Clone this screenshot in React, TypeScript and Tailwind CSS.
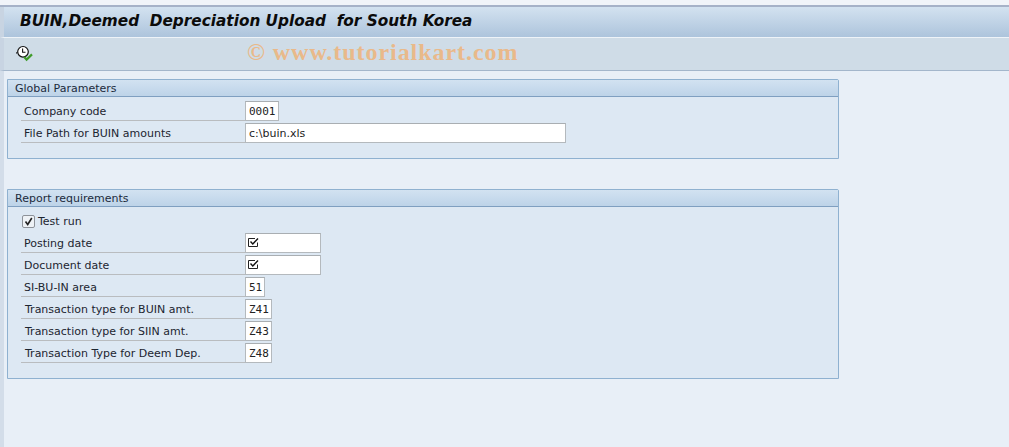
import React from "react";

const font = "font-['DejaVu_Sans',sans-serif]";

function Field({ value, w, mono = true, check = false }: { value?: string; w: string; mono?: boolean; check?: boolean }) {
  return (
    <div
      className={`${w} h-[20px] bg-white border border-[#b4b9bd] border-t-[#a9aeb2] flex items-center pl-[3px] text-[11px] text-[#222] leading-none ${mono ? "font-['DejaVu_Sans_Mono',monospace]" : ""}`}
    >
      {check ? <CheckBoxIcon /> : value}
    </div>
  );
}

function CheckBoxIcon() {
  return (
    <svg width="11" height="11" viewBox="0 0 11 11" className="-ml-[1px] -mt-[1px]">
      <path d="M9.5 5.5V9.5H0.5V1.5H7" fill="none" stroke="#222" strokeWidth="1" />
      <path d="M2.5 4.5L4.8 7L10 1.5" fill="none" stroke="#111" strokeWidth="1.4" />
    </svg>
  );
}

function Row({ label, children, pl = "pl-[3px]" }: { label: string; children: React.ReactNode; pl?: string }) {
  return (
    <div className="flex h-[22px] items-start">
      <div className={`w-[224px] h-[20px] border-b border-[#b9bcbf] ${pl} pt-[4px] flex items-center text-[11px] text-[#1c2530] whitespace-nowrap`}>
        {label}
      </div>
      {children}
    </div>
  );
}

function Group({ title, className, children }: { title: string; className: string; children: React.ReactNode }) {
  return (
    <section className={`w-[832px] ${className} border border-[#8fb1d0] rounded-tr-[2px] bg-[#dde8f3] flex flex-col`}>
      <div className="h-[17px] shrink-0 border-b border-[#7f9fc0] bg-gradient-to-b from-[#d2e2f1] to-[#bdd3e8] pl-[7px] pt-[2px] flex items-center text-[11px] text-[#1c2b3c]">
        {title}
      </div>
      <div className="pl-[13px]">{children}</div>
    </section>
  );
}

export default function App() {
  return (
    <div className={`w-[1009px] h-[447px] overflow-hidden bg-[#e8eff7] ${font}`}>
      <div className="h-[5px] bg-[#f1f4f9] border-l-[3px] border-[#f1f4f9]" />
      <div className="h-[2px] bg-[#a6b2c8]" />
      <div className="h-[30px] border-l-[4px] border-[#c8d4e2] bg-gradient-to-b from-[#d3e2f0] to-[#adc4dc] pl-[16px] flex items-center">
        <h1 className="font-bold italic text-[15.3px] text-[#0b0b0b] whitespace-pre leading-none">
          BUIN,Deemed  Depreciation Upload  for South Korea
        </h1>
      </div>
      <div className="relative h-[34px] border-t border-[#eef3f8] border-b border-b-[#a3b6cb] border-l-[4px] border-l-[#c8d4e2] bg-[#cfdce7] pl-[12px] flex items-center">
        <svg width="17" height="17" viewBox="0 0 17 17" className="-mt-[2px]">
          <circle cx="7" cy="6.8" r="5.3" fill="#fff" stroke="#111" strokeWidth="1.2" />
          <path d="M6.6 3.5V7.2H9.5" fill="none" stroke="#111" strokeWidth="1.1" />
          <path d="M1 7L0.5 8.5" stroke="#111" />
          <path d="M8.2 12L10.6 14.6L16 9.4" fill="none" stroke="#3f9c2a" strokeWidth="2.2" />
        </svg>
        <div className="absolute left-[243px] top-[-1px] font-['Liberation_Serif',serif] font-bold text-[24px] leading-[30px] tracking-[0.95px] text-[#e9b98a] whitespace-pre">
          © www.tutorialkart.com
        </div>
      </div>
      <div className="h-[376px] border-l-[4px] border-[#d3dde9] pl-[3px] pt-[8px] flex flex-col">
        <Group title="Global Parameters" className="h-[80px]">
          <div className="pt-[4px]">
            <Row label="Company code">
              <Field value="0001" w="w-[34px]" />
            </Row>
            <Row label="File Path for BUIN amounts">
              <Field value="c:\buin.xls" w="w-[321px]" mono={false} />
            </Row>
          </div>
        </Group>
        <div className="h-[30px] shrink-0" />
        <Group title="Report requirements" className="h-[190px]">
          <div className="pt-[4px]">
            <div className="h-[22px] flex items-start pl-[1px] gap-[3px] text-[11px] text-[#1c2530]">
              <span className="mt-[4px] w-[13px] h-[13px] bg-[#eef2f6] border border-[#8d9299] rounded-[2px] flex items-center justify-center">
                <svg width="9" height="9" viewBox="0 0 9 9">
                  <path d="M1.5 4.5L3.7 7.5L7.8 1" fill="none" stroke="#222" strokeWidth="1.6" />
                </svg>
              </span>
              <span className="pt-[3px]">Test run</span>
            </div>
            <Row label="Posting date">
              <Field w="w-[76px]" check />
            </Row>
            <Row label="Document date">
              <Field w="w-[76px]" check />
            </Row>
            <Row label="SI-BU-IN area">
              <Field value="51" w="w-[20px]" />
            </Row>
            <Row label="Transaction type for BUIN amt." pl="pl-[4px]">
              <Field value="Z41" w="w-[27px]" />
            </Row>
            <Row label="Transaction type for SIIN amt." pl="pl-[4px]">
              <Field value="Z43" w="w-[27px]" />
            </Row>
            <Row label="Transaction Type for Deem Dep." pl="pl-[4px]">
              <Field value="Z48" w="w-[27px]" />
            </Row>
          </div>
        </Group>
      </div>
    </div>
  );
}
